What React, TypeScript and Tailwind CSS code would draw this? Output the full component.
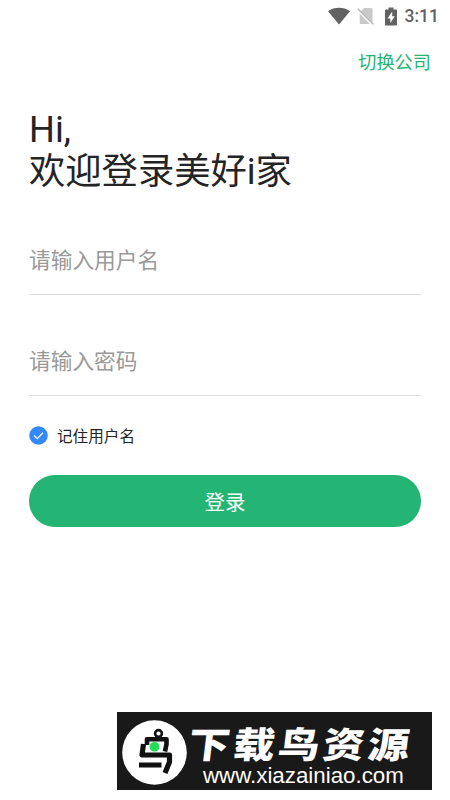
import { useState } from 'react'

function StatusBar() {
  return (
    <div className="flex h-8 items-center justify-end pr-[11px] text-[#626262]">
      <svg width="22" height="18" viewBox="0 0 22 18" fill="currentColor">
        <path d="M0 4.2C6-0.4 16-0.4 22 4.2L11 17.6Z" />
      </svg>
      <svg className="ml-[7px]" width="18" height="18" viewBox="0 0 18 18">
        <path d="M7 1H14.2Q15.5 1 15.5 2.3V15.7Q15.5 17 14.2 17H4Q2.7 17 2.7 15.7V5.3Z" fill="#c9c9c9" />
        <path d="M0.5 2.5L15.8 17.8" stroke="#fff" strokeWidth="3" />
        <path d="M0.8 1.8L16.3 17.3" stroke="#b5b5b5" strokeWidth="1.5" />
      </svg>
      <svg className="ml-[9px]" width="14" height="19" viewBox="0 0 14 19">
        <path d="M4.5 0.5H9.5V2.5H12Q13 2.5 13 3.5V17.5Q13 18.5 12 18.5H2Q1 18.5 1 17.5V3.5Q1 2.5 2 2.5H4.5Z" fill="currentColor" />
        <path d="M8.2 4.5L3.5 11.5H6.3V16L10.8 9.2H8.2Z" fill="#fff" />
      </svg>
      <span className="ml-[7px] pt-px font-['Roboto',sans-serif] text-[17.5px] leading-none font-medium">3:11</span>
    </div>
  )
}

function Field({ placeholder, type = 'text' }: { placeholder: string; type?: string }) {
  return (
    <input
      type={type}
      placeholder={placeholder}
      className="block h-[71px] w-full border-b border-[#dedede] bg-transparent pb-[2px] text-[21.7px] text-[#242424] placeholder:text-[#999] focus:outline-none"
    />
  )
}

function Banner() {
  return (
    <div className="mt-auto mr-[18px] mb-[10px] ml-[117px] flex h-[78px] bg-[#191919] pt-2 pl-[5px] text-white">
      <svg className="shrink-0" width="65" height="65" viewBox="0 0 65 65" fill="none">
        <circle cx="32.5" cy="32.5" r="32.3" fill="#fff" />
        <circle cx="36.5" cy="13.5" r="3.4" stroke="#111" strokeWidth="2.6" />
        <path d="M25 25V19.3H44.5V24L43 31.5" stroke="#111" strokeWidth="4.6" strokeLinejoin="round" />
        <path d="M21.5 24L20 35H47.5V42L43 53" stroke="#111" strokeWidth="5.2" strokeLinejoin="round" />
        <path d="M17 45H39.5" stroke="#111" strokeWidth="5" />
        <circle cx="32.5" cy="26.8" r="4.9" fill="#22dc58" />
      </svg>
      <div className="flex flex-col">
        <span className="ml-[2px] origin-left scale-x-[1.15] -skew-x-6 font-['Noto_Sans_CJK_SC',sans-serif] text-[36px] leading-[44px] font-black tracking-[3px] whitespace-nowrap">
          下载鸟资源
        </span>
        <span className="ml-4 pt-px font-['Liberation_Sans',Arial,sans-serif] text-[22.3px] leading-[22px]">www.xiazainiao.com</span>
      </div>
    </div>
  )
}

export default function App() {
  const [remember, setRemember] = useState(true)

  return (
    <div className="flex h-[800px] w-[450px] flex-col overflow-hidden bg-white font-['Noto_Sans_CJK_SC',sans-serif] text-[#242424]">
      <StatusBar />
      <div className="flex h-[60px] items-center justify-end pr-[19px]">
        <button className="pb-px text-[18.2px] leading-none text-[#24b574]">切换公司</button>
      </div>
      <main className="pr-[29px] pl-[29px]">
        <h1 className="mt-[17px] font-['Roboto','Noto_Sans_CJK_SC',sans-serif] text-[36.3px]">
          <span className="block leading-[42px]">Hi,</span>
          <span className="block leading-[42px] whitespace-nowrap">欢迎登录美好i家</span>
        </h1>
        <form className="mt-[31px]" onSubmit={e => e.preventDefault()}>
          <Field placeholder="请输入用户名" />
          <div className="mt-[30px]">
            <Field placeholder="请输入密码" type="password" />
          </div>
          <button type="button" onClick={() => setRemember(!remember)} className="mt-[29px] flex h-5 items-center gap-[9px]">
            <svg width="19" height="19" viewBox="0 0 19 19" fill="none">
              <circle cx="9.5" cy="9.5" r="9.3" fill={remember ? '#3388fa' : '#ccc'} />
              <path d="M5 9.5L8.3 12.7L14 6.8" stroke="#fff" strokeWidth="1.3" />
            </svg>
            <span className="pt-[2px] text-[15.6px] leading-none">记住用户名</span>
          </button>
          <button type="submit" className="mt-[30px] h-[52px] w-full rounded-full bg-[#24b574] text-[20.5px] text-white">
            登录
          </button>
        </form>
      </main>
      <Banner />
    </div>
  )
}
